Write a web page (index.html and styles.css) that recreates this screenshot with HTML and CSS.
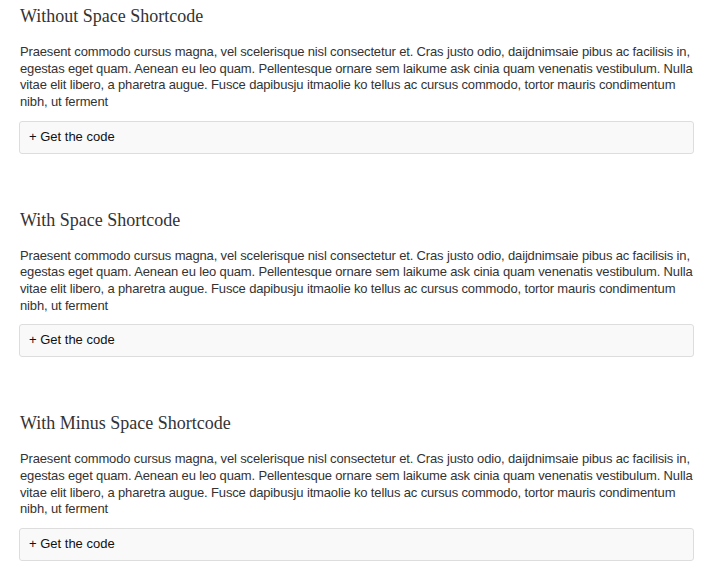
FILE: index.html
```html
<!DOCTYPE html>
<html>
<head>
<meta charset="utf-8">
<link rel="stylesheet" href="styles.css">
</head>
<body>
<div class="page">
  <section class="sample">
    <h2 class="title">Without Space Shortcode</h2>
    <p class="text">Praesent commodo cursus magna, vel scelerisque nisl consectetur et. Cras justo odio, daijdnimsaie pibus ac facilisis in, egestas eget quam. Aenean eu leo quam. Pellentesque ornare sem laikume ask cinia quam venenatis vestibulum. Nulla vitae elit libero, a pharetra augue. Fusce dapibusju itmaolie ko tellus ac cursus commodo, tortor mauris condimentum nibh, ut ferment</p>
    <div class="code-toggle">+ Get the code</div>
  </section>
  <section class="sample">
    <h2 class="title">With Space Shortcode</h2>
    <p class="text">Praesent commodo cursus magna, vel scelerisque nisl consectetur et. Cras justo odio, daijdnimsaie pibus ac facilisis in, egestas eget quam. Aenean eu leo quam. Pellentesque ornare sem laikume ask cinia quam venenatis vestibulum. Nulla vitae elit libero, a pharetra augue. Fusce dapibusju itmaolie ko tellus ac cursus commodo, tortor mauris condimentum nibh, ut ferment</p>
    <div class="code-toggle">+ Get the code</div>
  </section>
  <section class="sample">
    <h2 class="title">With Minus Space Shortcode</h2>
    <p class="text">Praesent commodo cursus magna, vel scelerisque nisl consectetur et. Cras justo odio, daijdnimsaie pibus ac facilisis in, egestas eget quam. Aenean eu leo quam. Pellentesque ornare sem laikume ask cinia quam venenatis vestibulum. Nulla vitae elit libero, a pharetra augue. Fusce dapibusju itmaolie ko tellus ac cursus commodo, tortor mauris condimentum nibh, ut ferment</p>
    <div class="code-toggle">+ Get the code</div>
  </section>
</div>
</body>
</html>
```
FILE: styles.css
```css
html, body {
  margin: 0;
  padding: 0;
  background: #fff;
}
.page {
  width: 675px;
  padding: 5px 0 0 19px;
  display: flex;
  flex-direction: column;
  gap: 55px;
}
.sample {
  display: flex;
  flex-direction: column;
}
.title {
  margin: 0 0 17px 1px;
  font-family: "Liberation Serif", Georgia, serif;
  font-weight: normal;
  font-size: 18px;
  line-height: 22px;
  color: #333;
}
.text {
  margin: 0 0 10px 1px;
  font-family: "Liberation Sans", Arial, sans-serif;
  font-size: 13px;
  letter-spacing: -0.15px;
  line-height: 16.67px;
  color: #333;
}
.code-toggle {
  border: 1px solid #ddd;
  border-radius: 3px;
  background: #f9f9f9;
  padding: 6px 9px 8px;
  font-family: "Liberation Sans", Arial, sans-serif;
  font-size: 13px;
  line-height: 17px;
  color: #111;
}
```
